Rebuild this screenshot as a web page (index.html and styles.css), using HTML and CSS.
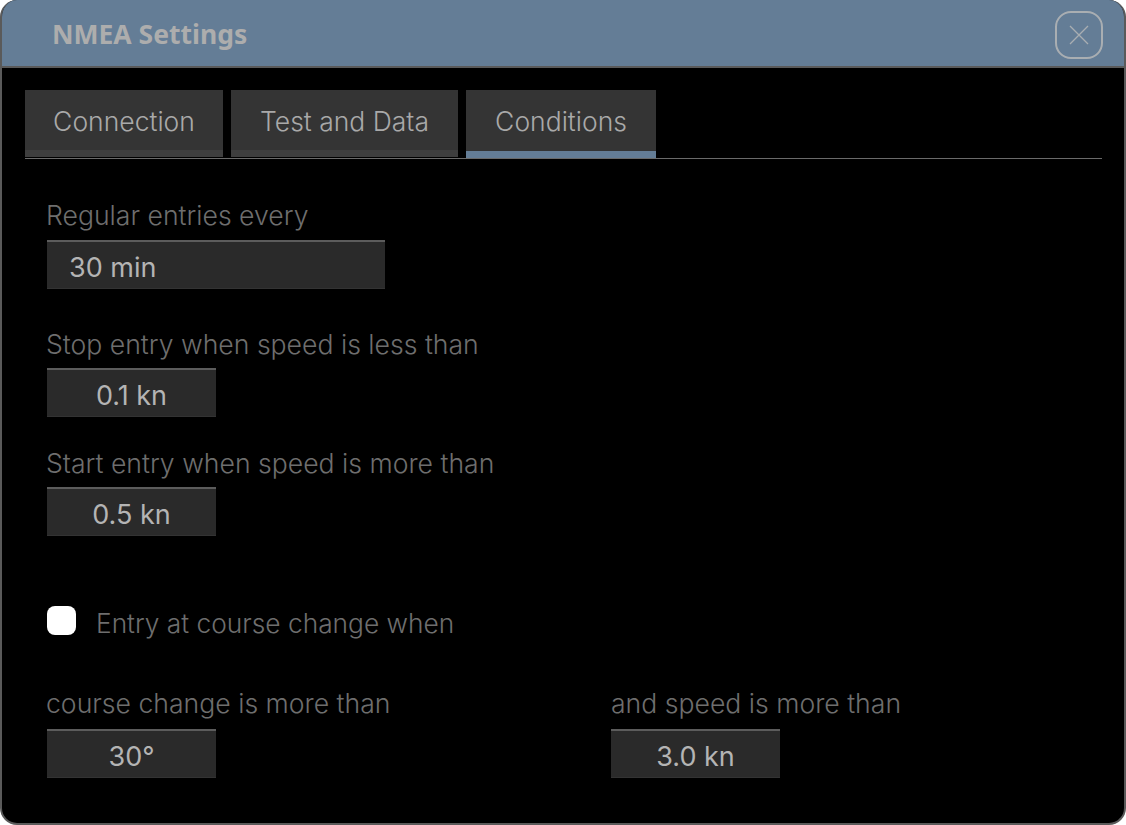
FILE: index.html
```html
<html>
    <head>
        <title>NMEA Settings</title>
        <link rel="stylesheet" href="styles.css">
    </head>
    <body>
        <div class="dialog">
            <div class="titlebar">
                <span class="title">NMEA Settings</span>
                <button class="close">
                    <svg width="20" height="20" viewBox="0 0 20 20"><path d="M1 1L19 19M19 1L1 19" stroke="#a9aeb2" stroke-width="1.3" fill="none"/></svg>
                </button>
            </div>
            <div class="content">
                <div class="tabs">
                    <div class="tab tab1">Connection</div>
                    <div class="tab tab2">Test and Data</div>
                    <div class="tab tab3 active">Conditions</div>
                </div>
                <div class="label first">Regular entries every</div>
                <div class="field wide">30 min</div>
                <div class="label stop">Stop entry when speed is less than</div>
                <div class="field">0.1 kn</div>
                <div class="label start">Start entry when speed is more than</div>
                <div class="field">0.5 kn</div>
                <div class="check">
                    <span class="box"></span>
                    <span class="checktext">Entry at course change when</span>
                </div>
                <div class="cols">
                    <div class="col">
                        <div class="label">course change is more than</div>
                        <div class="field">30°</div>
                    </div>
                    <div class="col">
                        <div class="label">and speed is more than</div>
                        <div class="field">3.0 kn</div>
                    </div>
                </div>
            </div>
        </div>
    </body>
</html>
```

FILE: styles.css
```css
html,body{
    margin: 0;
    background-color: white;
}
body{
    width: 1126px;
    height: 825px;
    overflow: hidden;
    font-family: "Inter", "Noto Sans", sans-serif;
}
.dialog{
    box-sizing: border-box;
    width: 1126px;
    height: 825px;
    background-color: black;
    border: 2px solid #5a5a5a;
    border-top: none;
    border-radius: 17px;
    overflow: hidden;
}
.titlebar{
    box-sizing: border-box;
    height: 68px;
    background-color: #647d96;
    border-bottom: 2px solid #5a5a5a;
    display: flex;
    align-items: center;
    justify-content: space-between;
    padding: 0 21px 0 50px;
}
.title{
    font-family: "Noto Sans", sans-serif;
    font-size: 26.5px;
    font-weight: 700;
    color: #adadad;
    margin-top: 1px;
}
.close{
    box-sizing: border-box;
    width: 48px;
    height: 48px;
    margin-top: 4px;
    border: 2px solid #a9aeb2;
    border-radius: 16px;
    background: none;
    padding: 0;
    display: flex;
    align-items: center;
    justify-content: center;
}
.content{
    padding: 22px 22px 0 23px;
}
.tabs{
    display: flex;
    gap: 8px;
    height: 68px;
    border-bottom: 1px solid #6a6a6a;
}
.tab{
    box-sizing: border-box;
    height: 67px;
    padding-top: 15px;
    text-align: center;
    background-color: #343434;
    border-bottom: 7px solid #3e3e3e;
    color: #a9a9a9;
    font-size: 26.5px;
    font-weight: 300;
}
.tab1{
    width: 198px;
}
.tab2{
    width: 227px;
}
.tab3{
    width: 190px;
}
.tab.active{
    height: 68px;
    border-bottom: 7px solid #647d96;
}
.label{
    color: #6e6e6e;
    font-size: 26.6px;
    font-weight: 300;
    line-height: 32px;
    margin-left: 21px;
    margin-bottom: 8px;
}
.first{
    margin-top: 40px;
    margin-bottom: 9px;
}
.stop{
    margin-top: 39px;
}
.start{
    margin-top: 30px;
}
.field{
    box-sizing: border-box;
    width: 169px;
    height: 49px;
    margin-left: 22px;
    background-color: #2a2a2a;
    border-top: 2px solid #5c5c5c;
    border-bottom: 1px solid #333333;
    color: #b4b4b4;
    font-size: 27px;
    line-height: 52px;
    text-align: center;
}
.wide{
    width: 338px;
    text-align: left;
    padding-left: 22px;
}
.check{
    display: flex;
    align-items: center;
    gap: 20px;
    margin-top: 65px;
    margin-left: 22px;
    height: 44px;
}
.box{
    width: 29px;
    height: 29px;
    margin-top: -6px;
    background-color: white;
    border-radius: 8px;
}
.checktext{
    color: #6e6e6e;
    font-size: 26.3px;
    font-weight: 300;
}
.cols{
    display: flex;
    margin-top: 42px;
}
.col{
    flex: none;
    width: 564px;
}
.col .label{
    margin-bottom: 10px;
}
.col + .col .label{
    margin-left: 22px;
}
```
